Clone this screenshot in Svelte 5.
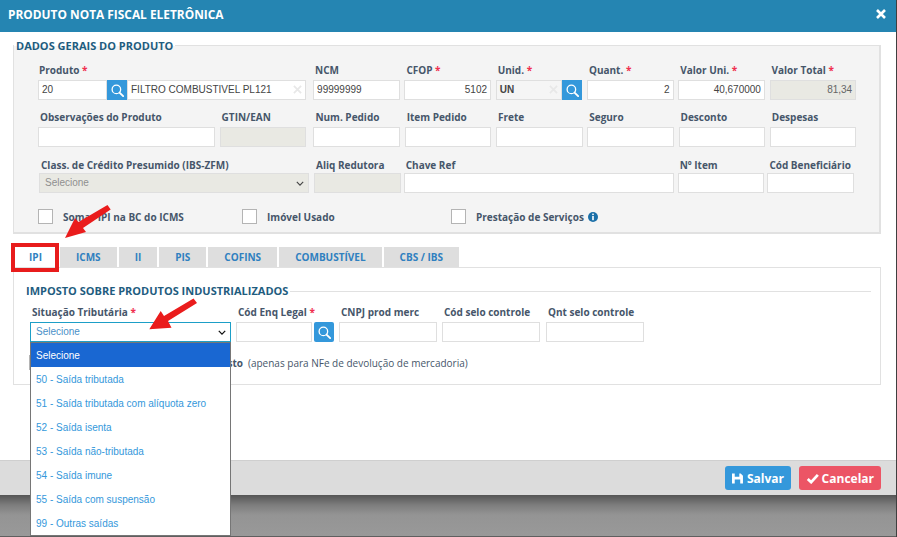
<script>
  const row2 = ['Num. Pedido', 'Item Pedido', 'Frete', 'Seguro', 'Desconto', 'Despesas'];
  const tabs = ['IPI', 'ICMS', 'II', 'PIS', 'COFINS', 'COMBUSTÍVEL', 'CBS / IBS'];
  const options = [
    'Selecione',
    '50 - Saída tributada',
    '51 - Saída tributada com alíquota zero',
    '52 - Saída isenta',
    '53 - Saída não-tributada',
    '54 - Saída imune',
    '55 - Saída com suspensão',
    '99 - Outras saídas',
  ];
</script>

{#snippet lens()}
  <svg class="lens" viewBox="0 0 14 14" width="13" height="13" aria-hidden="true">
    <circle cx="5.8" cy="5.8" r="4.6" fill="none" stroke="#fff" stroke-width="1.4" />
    <path d="M9.2 9.2l3.9 3.9" stroke="#fff" stroke-width="2" stroke-linecap="round" />
  </svg>
{/snippet}

{#snippet cross()}
  <svg class="clear" viewBox="0 0 10 10" width="9" height="9" aria-hidden="true">
    <path d="M1 1l8 8M9 1l-8 8" stroke="#e8e8e8" stroke-width="2" />
  </svg>
{/snippet}

<div class="screen">
  <div class="modal">
    <header class="head">
      <h1>PRODUTO NOTA FISCAL ELETRÔNICA</h1>
      <svg viewBox="0 0 10 10" width="10" height="10" aria-hidden="true">
        <path d="M1 1l8 8M9 1l-8 8" stroke="#fff" stroke-width="2.6" />
      </svg>
    </header>

    <main class="body">
      <section class="general">
        <h2>DADOS GERAIS DO PRODUTO</h2>

        <div class="row r1">
          <div class="f w268 first">
            <label>Produto <i>*</i></label>
            <div class="group">
              <div class="in prod-code">20</div>
              <div class="btn">{@render lens()}</div>
              <div class="in prod-desc">FILTRO COMBUSTIVEL PL121 {@render cross()}</div>
            </div>
          </div>
          <div class="f w87 after-wide"><label>NCM</label><div class="in">99999999</div></div>
          <div class="f w87"><label>CFOP <i>*</i></label><div class="in right">5102</div></div>
          <div class="f w87">
            <label>Unid. <i>*</i></label>
            <div class="group">
              <div class="in unid">UN {@render cross()}</div>
              <div class="btn">{@render lens()}</div>
            </div>
          </div>
          <div class="f w87"><label>Quant. <i>*</i></label><div class="in right">2</div></div>
          <div class="f w87"><label>Valor Uni. <i>*</i></label><div class="in right">40,670000</div></div>
          <div class="f w87"><label>Valor Total <i>*</i></label><div class="in right off">81,34</div></div>
        </div>

        <div class="row r2">
          <div class="f w177"><label>Observações do Produto</label><div class="in"></div></div>
          <div class="f w87"><label>GTIN/EAN</label><div class="in off"></div></div>
          {#each row2 as name, i}
            <div class="f w87" class:after-wide={i === 0}><label>{name}</label><div class="in"></div></div>
          {/each}
        </div>

        <div class="row r3">
          <div class="f w270">
            <label>Class. de Crédito Presumido (IBS-ZFM)</label>
            <div class="in off sel">
              <span>Selecione</span>
              <svg viewBox="0 0 10 6" width="8" height="5" aria-hidden="true">
                <path d="M1 1l4 4 4-4" fill="none" stroke="#444" stroke-width="1.4" />
              </svg>
            </div>
          </div>
          <div class="f w87 nudge-right"><label>Aliq Redutora</label><div class="in off"></div></div>
          <div class="f w270 nudge-left"><label>Chave Ref</label><div class="in"></div></div>
          <div class="f w87"><label>Nº Item</label><div class="in"></div></div>
          <div class="f w87 nudge-left"><label>Cód Beneficiário</label><div class="in"></div></div>
        </div>

        <div class="checks">
          <label class="chk c1"><b></b>Somar IPI na BC do ICMS</label>
          <label class="chk c2"><b></b>Imóvel Usado</label>
          <label class="chk">
            <b></b>Prestação de Serviços
            <svg class="info" viewBox="0 0 10 10" width="10" height="10" aria-hidden="true">
              <circle cx="5" cy="5" r="5" fill="#1a6fa8" />
              <rect x="4.2" y="1.6" width="1.6" height="1.5" fill="#fff" />
              <rect x="4.2" y="4" width="1.6" height="4.2" fill="#fff" />
            </svg>
          </label>
        </div>
      </section>

      <nav class="tabs">
        {#each tabs as t, i}
          <div class="tab" class:active={i === 0}>{t}</div>
        {/each}
      </nav>

      <section class="panel">
        <div class="legend"><h2>IMPOSTO SOBRE PRODUTOS INDUSTRIALIZADOS</h2><span></span></div>
        <div class="row r4">
          <div class="f w200">
            <label>Situação Tributária <i>*</i></label>
            <div class="in focus">
              <span>Selecione</span>
              <svg viewBox="0 0 10 6" width="8" height="5" aria-hidden="true">
                <path d="M1 1l4 4 4-4" fill="none" stroke="#111" stroke-width="1.6" />
              </svg>
            </div>
          </div>
          <div class="f w98">
            <label>Cód Enq Legal <i>*</i></label>
            <div class="group enq">
              <div class="in"></div>
              <div class="btn round">{@render lens()}</div>
            </div>
          </div>
          <div class="f w98"><label>CNPJ prod merc</label><div class="in"></div></div>
          <div class="f w98"><label>Cód selo controle</label><div class="in"></div></div>
          <div class="f w98 last"><label>Qnt selo controle</label><div class="in"></div></div>
        </div>
        <div class="devol">
          <span class="box"></span>
          <b>Ajuste de custo</b>
          <span>(apenas para NFe de devolução de mercadoria)</span>
        </div>
      </section>
    </main>

    <footer class="foot">
      <div class="action save">
        <svg viewBox="0 0 12 11" width="12" height="11" aria-hidden="true">
          <path fill="#fff" fill-rule="evenodd" d="M0 0h9.5L12 2.5V11H0zM3 0v3.5h5V0zM3 6.5V11h6V6.5z" />
        </svg>
        Salvar
      </div>
      <div class="action cancel">
        <svg viewBox="0 0 14 12" width="14" height="11" aria-hidden="true">
          <path d="M1.5 6.5l3.7 3.5 7.3-8" fill="none" stroke="#fff" stroke-width="3" />
        </svg>
        Cancelar
      </div>
    </footer>
  </div>

  <ul class="dropdown">
    {#each options as o, i}
      <li class:hl={i === 0}>{o}</li>
    {/each}
  </ul>

  <div class="mark"></div>
  <svg class="arrows" width="897" height="537" viewBox="0 0 897 537" aria-hidden="true">
    <path fill="#ea1c1c" d="M107.5 205L110.7 209.5L83 228L86 232L65 238L75 218L78.5 222Z" />
    <path fill="#ea1c1c" d="M193.5 298.5L197 303L168 321L171.5 327.7L149.3 329.3L160.7 311L164 316Z" />
  </svg>
</div>

<style>
  :global(body) {
    margin: 0;
    background: #8a8a8a;
    font-family: "Open Sans", "Liberation Sans", sans-serif;
  }
  .screen {
    position: relative;
    width: 897px;
    height: 537px;
    overflow: hidden;
    background: linear-gradient(#555 495px, #7d7d7d 505px, #949494 515px, #999 536px, #5f5f5f 536px);
  }
  .screen::after {
    content: "";
    position: absolute;
    top: 0;
    right: 0;
    width: 1px;
    height: 100%;
    background: #3f3f3f;
  }
  .modal {
    width: 896px;
    height: 495px;
    background: #fff;
    display: flex;
    flex-direction: column;
    position: relative;
    z-index: 1;
  }
  .head {
    height: 32px;
    flex: none;
    background: #2585b2;
    display: flex;
    align-items: center;
    justify-content: space-between;
    padding: 0 10px 5px 8px;
    box-sizing: border-box;
  }
  h1 {
    margin: 0;
    font-size: 11.9px;
    font-weight: 700;
    color: #fff;
  }
  .body {
    flex: 1;
    padding: 13px 13px 0;
    min-height: 0;
  }
  h2 {
    margin: 0;
    font-size: 11px;
    font-weight: 700;
    color: #1f5d7f;
    line-height: 14px;
    white-space: nowrap;
  }
  .general {
    position: relative;
    height: 189px;
    box-sizing: border-box;
    width: 868px;
    background: #f4f4f4;
    border: 2px solid #e1e1e1;
    border-width: 1px 2px 2px 1px;
    padding: 18px 0 0 24px;
  }
  .general h2 {
    position: absolute;
    top: -7px;
    left: 0;
    padding: 0 2px;
    background: linear-gradient(#fff 50%, #f4f4f4 50%);
  }
  .row { display: flex; gap: 4.6px; }
  .r2 { margin-top: 11px; }
  .r3 { margin-top: 12px; margin-left: 1px; gap: 4px; }
  .r3 .f > label { margin-bottom: 1px; }
  .f { flex: none; display: flex; flex-direction: column; }
  .w268 { width: 268px; }
  .w87 { width: 86.7px; }
  .w177 { width: 177px; }
  .w270 { width: 270px; }
  .w200 { width: 201px; }
  .w98 { width: 98px; }
  .after-wide { margin-left: 2.5px; }
  .nudge-right { margin-left: 1px; }
  .nudge-left { margin-left: -1px; }
  .last { margin-left: 1px; }
  .f > label {
    font-size: 10px;
    font-weight: 700;
    color: #46566a;
    line-height: 13px;
    height: 13px;
    margin: 0 0 3px 2px;
    white-space: nowrap;
  }
  .first > label { margin-left: 1px; }
  i { font-style: normal; color: #f0304f; }
  .in {
    height: 20px;
    box-sizing: border-box;
    background: #fff;
    border: 1px solid #dfdfdf;
    font: 10px/18px "Liberation Sans", sans-serif;
    color: #444;
    padding: 0 3px;
    position: relative;
    white-space: nowrap;
    overflow: hidden;
  }
  .right { text-align: right; }
  .off { background: #e9e9e3; color: #666; }
  .group { display: flex; height: 20px; }
  .prod-code { width: 69px; flex: none; }
  .prod-desc { flex: 1; }
  .unid { flex: 1; background: #f5f5f5; font-weight: 700; }
  .clear { position: absolute; right: 3px; top: 4px; }
  .btn {
    width: 20px;
    flex: none;
    background: #3498db;
    display: flex;
    align-items: center;
    justify-content: center;
  }
  .round { border-radius: 2px; margin-left: 2px; height: 20px; }
  .sel, .focus {
    display: flex;
    align-items: center;
    justify-content: space-between;
    padding: 0 4px 0 5px;
    color: #8f8f8f;
  }
  .focus { border-color: #1d9fc7; color: #4a90c8; }
  .checks {
    display: flex;
    margin-top: 16px;
    height: 15px;
    align-items: center;
  }
  .chk {
    display: flex;
    align-items: center;
    font-size: 10px;
    font-weight: 700;
    color: #46566a;
    white-space: nowrap;
  }
  .chk b {
    width: 15px;
    height: 15px;
    box-sizing: border-box;
    background: #fff;
    border: 1px solid #b4b4b4;
    margin-right: 10px;
  }
  .c1 { width: 204px; }
  .c2 { width: 209px; }
  .info { margin-left: 4px; }
  .tabs {
    display: flex;
    gap: 2px;
    margin-top: 13px;
    height: 20px;
  }
  .tab {
    padding: 0 16px;
    background: #dedede;
    color: #2f80c0;
    font-size: 10px;
    font-weight: 700;
    line-height: 21px;
    height: 20px;
    box-sizing: border-box;
    white-space: nowrap;
  }
  .tab.active { background: #fff; width: 45px; padding: 0; text-align: center; }
  .panel {
    width: 868px;
    box-sizing: border-box;
    height: 118px;
    border: 1px solid #e1e1e1;
    padding: 16px 0 0 12px;
  }
  .legend { display: flex; align-items: center; gap: 2px; }
  .legend span { flex: 1; height: 1px; background: #e1e1e1; margin-right: 9px; }
  .r4 { margin-top: 8px; gap: 5px; margin-left: 4px; }
  .enq .in { flex: 1; }
  .devol {
    display: flex;
    align-items: center;
    gap: 5px;
    height: 15px;
    margin: 13px 0 0 3px;
    font-size: 10px;
    color: #46566a;
    white-space: nowrap;
  }
  .box {
    width: 15px;
    height: 15px;
    box-sizing: border-box;
    background: #fff;
    border: 1px solid #b4b4b4;
  }
  .devol b {
    width: 194px;
    font-weight: 700;
    text-align: right;
  }
  .foot {
    height: 35px;
    flex: none;
    box-sizing: border-box;
    background: #dcdcdc;
    border-top: 1px solid #cfcfcf;
    display: flex;
    justify-content: flex-end;
    gap: 8px;
    padding: 5px 15px 0 0;
  }
  .action {
    height: 24px;
    border-radius: 3px;
    display: flex;
    align-items: center;
    color: #fff;
    font-size: 12px;
    font-weight: 700;
    box-sizing: border-box;
    padding: 0 7px;
  }
  .save { background: #3498db; width: 66px; gap: 4px; }
  .cancel { background: #ec5565; width: 82px; gap: 2px; }
  .dropdown {
    position: absolute;
    z-index: 3;
    left: 30px;
    top: 342px;
    width: 201px;
    box-sizing: border-box;
    margin: 0;
    padding: 0;
    list-style: none;
    background: #fff;
    border: 1px solid #767676;
  }
  .dropdown li {
    height: 24px;
    padding-left: 5px;
    font: 10px/26px "Liberation Sans", sans-serif;
    color: #3498db;
  }
  .dropdown li.hl { background: #1967d2; color: #fff; }
  .mark {
    position: absolute;
    z-index: 4;
    left: 11px;
    top: 243px;
    width: 48px;
    height: 29px;
    box-sizing: border-box;
    border: 4px solid #e81c1c;
  }
  .arrows { position: absolute; z-index: 5; left: 0; top: 0; pointer-events: none; }
</style>
